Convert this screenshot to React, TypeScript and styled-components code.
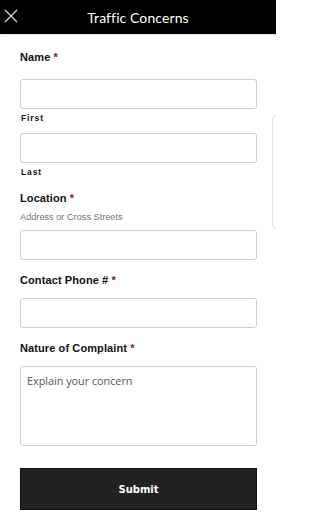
import styled, { createGlobalStyle } from 'styled-components';

const GlobalStyle = createGlobalStyle`
  html, body {
    margin: 0;
    padding: 0;
    background: #fff;
  }
  body {
    font-family: "Liberation Sans", Arial, sans-serif;
  }
`;

const Page = styled.div`
  position: relative;
  width: 276px;
  min-height: 512px;
  overflow: hidden;
`;

const Header = styled.header`
  height: 34px;
  background: #000;
  display: flex;
  align-items: center;
  justify-content: center;
  position: relative;
  box-shadow: 0 1px 2px rgba(0, 0, 0, 0.15);
`;

const CloseButton = styled.button`
  position: absolute;
  left: 3px;
  top: 8px;
  width: 16px;
  height: 16px;
  padding: 0;
  border: none;
  background: none;
  display: flex;
  cursor: pointer;
`;

const Title = styled.h1`
  margin: 0;
  color: #fff;
  font-family: Lato, "Open Sans", sans-serif;
  font-size: 14px;
  font-weight: 400;
  letter-spacing: 0.1px;
`;

const Form = styled.form`
  padding: 16px 20px 0;
  display: flex;
  flex-direction: column;
`;

const Label = styled.label<{ $gap?: number }>`
  display: block;
  font-size: 11px;
  font-weight: 700;
  color: #111;
  line-height: 14px;
  letter-spacing: 0.1px;
  margin-bottom: ${p => p.$gap ?? 15}px;
`;

const Required = styled.span`
  color: #7a1a1a;
`;

const Hint = styled.div`
  font-size: 9.2px;
  color: #777;
  line-height: 11px;
  margin: -5px 0 7px;
`;

const Input = styled.input`
  box-sizing: border-box;
  width: 237px;
  height: 30px;
  border: 1px solid #cfcfcf;
  border-radius: 3px;
  padding: 0 6px;
  font-size: 11px;
`;

const SubLabel = styled.div`
  font-size: 8.5px;
  font-weight: 700;
  letter-spacing: 0.9px;
  color: #111;
  line-height: 10px;
  margin: 4px 0 10px 1px;
`;

const Field = styled.div<{ $after?: number }>`
  display: flex;
  flex-direction: column;
  margin-bottom: ${p => p.$after ?? 0}px;
`;

const TextArea = styled.textarea`
  box-sizing: border-box;
  width: 237px;
  height: 80px;
  border: 1px solid #cfcfcf;
  border-radius: 3px;
  padding: 6px 6px;
  resize: none;
  font-family: "Open Sans", sans-serif;
  font-size: 10.8px;
  color: #111;
  &::placeholder {
    color: #555;
  }
`;

const SubmitButton = styled.button`
  margin-top: 22px;
  width: 237px;
  height: 42px;
  background: #222;
  color: #fff;
  border: 1px solid #111;
  font-family: "DejaVu Sans", Verdana, sans-serif;
  font-size: 10px;
  font-weight: 700;
  cursor: pointer;
`;

const SideTab = styled.div`
  position: absolute;
  left: 272px;
  top: 115px;
  width: 9px;
  height: 112px;
  border: 1px solid #e4e4e4;
  border-radius: 4px;
  background: #fff;
`;

const App = () => {
  return (
    <Page>
      <GlobalStyle />
      <Header>
        <CloseButton type="button" aria-label="Close">
          <svg width="16" height="16" viewBox="0 0 16 16">
            <path d="M2 2 L14 14 M14 2 L2 14" stroke="#ddd" strokeWidth="1.2" fill="none" />
          </svg>
        </CloseButton>
        <Title>Traffic Concerns</Title>
      </Header>

      <Form onSubmit={e => e.preventDefault()}>
        <Label $gap={15}>Name <Required>*</Required></Label>
        <Field>
          <Input type="text" />
          <SubLabel>First</SubLabel>
        </Field>
        <Field $after={4}>
          <Input type="text" />
          <SubLabel>Last</SubLabel>
        </Field>

        <Label $gap={12}>Location <Required>*</Required></Label>
        <Hint>Address or Cross Streets</Hint>
        <Field $after={13}>
          <Input type="text" />
        </Field>

        <Label $gap={11}>Contact Phone # <Required>*</Required></Label>
        <Field $after={13}>
          <Input type="tel" />
        </Field>

        <Label $gap={11}>Nature of Complaint <Required>*</Required></Label>
        <TextArea placeholder="Explain your concern" />

        <SubmitButton type="submit">Submit</SubmitButton>
      </Form>

      <SideTab />
    </Page>
  );
};

export default App;
